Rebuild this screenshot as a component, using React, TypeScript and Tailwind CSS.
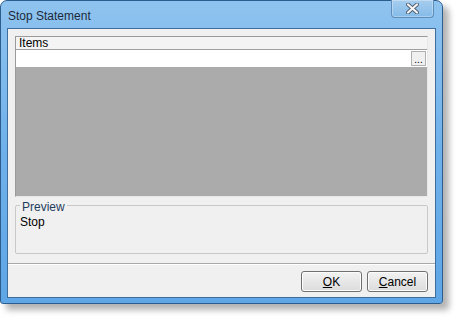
const font = { fontFamily: '"Liberation Sans", Arial, sans-serif' };

const Button = ({ label, u }: { label: string; u: string }) => {
  const rest = label.slice(1);
  return (
    <button className="w-[61px] h-[21px] border border-[#707070] rounded-[3px] bg-gradient-to-b from-[#f2f2f2] to-[#dcdcdc] text-[12px] text-black leading-none flex items-center justify-center shadow-[inset_0_0_0_1px_#fcfcfc]">
      <span>
        <span className="underline">{u}</span>
        {rest}
      </span>
    </button>
  );
};

export default function App() {
  return (
    <div className="w-[456px] h-[319px] bg-white overflow-hidden" style={font}>
      <div className="w-[443px] h-[304px] rounded-t-[7px] rounded-b-[3px] border border-[#2c5d8f] bg-gradient-to-b from-[#8fc3ef] via-[#6eb0ea] to-[#5fa6e6] shadow-[6px_6px_6px_rgba(0,0,0,0.3)] flex flex-col">
        {/* title bar */}
        <div className="h-[27px] flex items-start justify-between relative">
          <span className="pl-[7px] pt-[6px] text-[12px] text-[#1b2a3a]">Stop Statement</span>
          <div className="mr-[8px] w-[43px] h-[18px] -mt-px rounded-b-[4px] border border-[#5f8dba] border-t-0 bg-gradient-to-b from-[#a6cdee] to-[#84bbe9] shadow-[inset_0_0_0_1px_rgba(255,255,255,0.3)] flex items-center justify-center">
            <svg width="13" height="11" viewBox="0 0 13 11">
              <path d="M2 1.5 L11 9.5 M11 1.5 L2 9.5" stroke="#4a5a6c" strokeWidth="3.8" strokeLinecap="round" />
              <path d="M2 1.5 L11 9.5 M11 1.5 L2 9.5" stroke="#f4f4f4" strokeWidth="2.2" strokeLinecap="round" />
            </svg>
          </div>
        </div>
        {/* client area */}
        <div className="mx-[6px] mb-[5px] flex-1 border border-[#3e6e9e] bg-[#f0f0f0] flex flex-col">
          <div className="px-[7px] pt-[7px] flex flex-col">
            {/* items panel */}
            <div className="h-[161px] border border-[#9a9a9a] border-r-[#e8e8e8] border-b-[#e8e8e8] flex flex-col">
              <div className="h-[13px] bg-[#f4f4f4] text-[12px] leading-[13px] pl-[3px] text-black border-b border-[#a0a0a0]">
                Items
              </div>
              <div className="h-[17px] bg-white flex justify-end items-center pr-px">
                <div className="w-[15px] h-[15px] border border-[#b0b0b0] bg-[#f0f0f0] flex items-end justify-center text-[10px] leading-[10px] text-black">
                  ...
                </div>
              </div>
              <div className="flex-1 bg-[#ababab]" />
            </div>
            {/* preview group */}
            <div className="mt-[8px] h-[49px] border border-[#c8c8c8] rounded-[2px] relative px-[4px] pt-[7px]">
              <span className="absolute left-[4px] -top-[8px] bg-[#f0f0f0] px-[2px] text-[12px] text-[#1f3c5c]">
                Preview
              </span>
              <div className="text-[12px] text-black">Stop</div>
            </div>
          </div>
          <div className="mt-[9px] border-t border-[#a8a8a8] shadow-[0_1px_0_#ffffff]" />
          <div className="flex-1 flex justify-end items-start gap-[5px] pr-[7px] pt-[7px]">
            <Button label="OK" u="O" />
            <Button label="Cancel" u="C" />
          </div>
        </div>
      </div>
    </div>
  );
}
